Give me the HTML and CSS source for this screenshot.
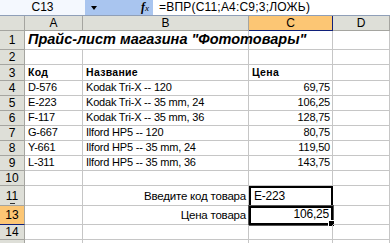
FILE: index.html
```html
<!DOCTYPE html>
<html lang="ru">
<head>
<meta charset="utf-8">
<link rel="stylesheet" href="styles.css">
</head>
<body>
<div class="fbar">
  <div class="namebox">C13</div>
  <div class="fbtn"><span class="arrow"></span></div>
  <div class="fx"><i>f</i><span class="x">x</span></div>
  <div class="formula">=ВПР(C11;A4:C9;3;ЛОЖЬ)</div>
</div>
<div class="sheet">
  <div class="h corner"></div><div class="h">A</div><div class="h">B</div><div class="h selc">C</div><div class="h">D</div>

  <div class="rh">1</div><div class="c title">Прайс-лист магазина "Фототовары"</div><div class="c"></div><div class="c"></div><div class="c"></div>
  <div class="rh">2</div><div class="c"></div><div class="c"></div><div class="c"></div><div class="c"></div>
  <div class="rh">3</div><div class="c bold">Код</div><div class="c bold">Название</div><div class="c bold">Цена</div><div class="c"></div>
  <div class="rh">4</div><div class="c">D-576</div><div class="c">Kodak Tri-X -- 120</div><div class="c num">69,75</div><div class="c"></div>
  <div class="rh">5</div><div class="c">E-223</div><div class="c">Kodak Tri-X -- 35 mm, 24</div><div class="c num">106,25</div><div class="c"></div>
  <div class="rh">6</div><div class="c">F-117</div><div class="c">Kodak Tri-X -- 35 mm, 36</div><div class="c num">128,75</div><div class="c"></div>
  <div class="rh">7</div><div class="c">G-667</div><div class="c">Ilford HP5 -- 120</div><div class="c num">80,75</div><div class="c"></div>
  <div class="rh">8</div><div class="c">Y-661</div><div class="c">Ilford HP5 -- 35 mm, 24</div><div class="c num">119,50</div><div class="c"></div>
  <div class="rh">9</div><div class="c">L-311</div><div class="c">Ilford HP5 -- 35 mm, 36</div><div class="c num">143,75</div><div class="c"></div>
  <div class="rh">10</div><div class="c"></div><div class="c"></div><div class="c"></div><div class="c"></div>
  <div class="rh r11">11<span class="hid"></span></div><div class="c"></div><div class="c num lbl">Введите код товара</div><div class="c input">E-223</div><div class="c"></div>
  <div class="rh selr">13</div><div class="c"></div><div class="c num lbl">Цена товара</div><div class="c num active">106,25<span class="handle"></span></div><div class="c"></div>
  <div class="rh">14</div><div class="c"></div><div class="c"></div><div class="c"></div><div class="c"></div>
  <div class="rh"></div><div class="c"></div><div class="c"></div><div class="c"></div><div class="c"></div>
</div>
</body>
</html>
```

FILE: styles.css
```css
html, body {
  margin: 0;
  padding: 0;
  background: #ffffff;
  overflow: hidden;
  width: 390px;
  height: 243px;
  font-family: "Liberation Sans", Arial, sans-serif;
}

.fbar {
  display: flex;
  height: 15px;
  background: #a9c5ef;
  border-bottom: 1px solid #8f9fb8;
  font-size: 12px;
  line-height: 15px;
}

.namebox {
  width: 85px;
  background: #f4f8fe;
  text-align: center;
  color: #000;
}

.fbtn {
  width: 18px;
  display: flex;
  align-items: center;
  justify-content: center;
}

.arrow {
  width: 0;
  height: 0;
  border-left: 3px solid transparent;
  border-right: 3px solid transparent;
  border-top: 4px solid #000;
}

.fx {
  width: 50px;
  text-align: right;
  padding-right: 4px;
  box-sizing: border-box;
  font-family: "Liberation Serif", serif;
  font-size: 12px;
  color: #000;
}

.fx i {
  font-style: italic;
  font-weight: bold;
}

.fx .x {
  font-size: 9px;
  font-style: italic;
}

.formula {
  flex: 1;
  background: #ffffff;
  padding-left: 6px;
  color: #000;
  white-space: nowrap;
  letter-spacing: 0.2px;
}

.sheet {
  display: grid;
  grid-template-columns: 25px 58px 166px 84px 1fr;
  grid-template-rows: 15px 19px 15px 16px repeat(7, 15px) 20px 19px 15px 15px;
  font-size: 11px;
}

.h, .rh {
  background: #dedfd8;
  border-right: 1px solid #a5a5a0;
  border-bottom: 1px solid #a5a5a0;
  display: flex;
  align-items: center;
  justify-content: center;
  font-size: 12px;
  color: #000;
  box-sizing: border-box;
  position: relative;
}

.hid {
  position: absolute;
  left: 10px;
  bottom: 1px;
  width: 5px;
  height: 1px;
  background: #333;
}

.selc {
  background: #fcc674;
  border-right: 1px solid #10207a;
  border-bottom: 1px solid #10207a;
}

.selr {
  background: #fcc674;
  border-bottom: 1px solid #10207a;
}

.c {
  border-right: 1px solid #c6c6c6;
  border-bottom: 1px solid #c6c6c6;
  box-sizing: border-box;
  display: flex;
  align-items: flex-end;
  padding: 0 2px 1px 3px;
  white-space: nowrap;
  overflow: visible;
  color: #000;
  font-size: 11px;
  line-height: 13px;
  position: relative;
  letter-spacing: -0.2px;
}

.title {
  font-weight: bold;
  font-style: italic;
  font-size: 14.5px;
  line-height: 17px;
  z-index: 1;
  border-right: none;
  letter-spacing: 0;
}

.bold {
  font-weight: bold;
  font-size: 10.5px;
  letter-spacing: 0.3px;
}

.num {
  justify-content: flex-end;
}

.lbl {
  font-size: 11.5px;
  padding-bottom: 2px;
}

.input {
  border: 2px solid #000;
  border-bottom: 1px solid #000;
  font-size: 12px;
  padding-bottom: 2px;
}

.active {
  border: 2px solid #000;
  outline: 1px solid #555;
  font-size: 12px;
  padding-bottom: 2px;
}

.handle {
  position: absolute;
  right: -4px;
  bottom: -4px;
  width: 5px;
  height: 5px;
  background: #000;
  border: 1px solid #fff;
}
```
